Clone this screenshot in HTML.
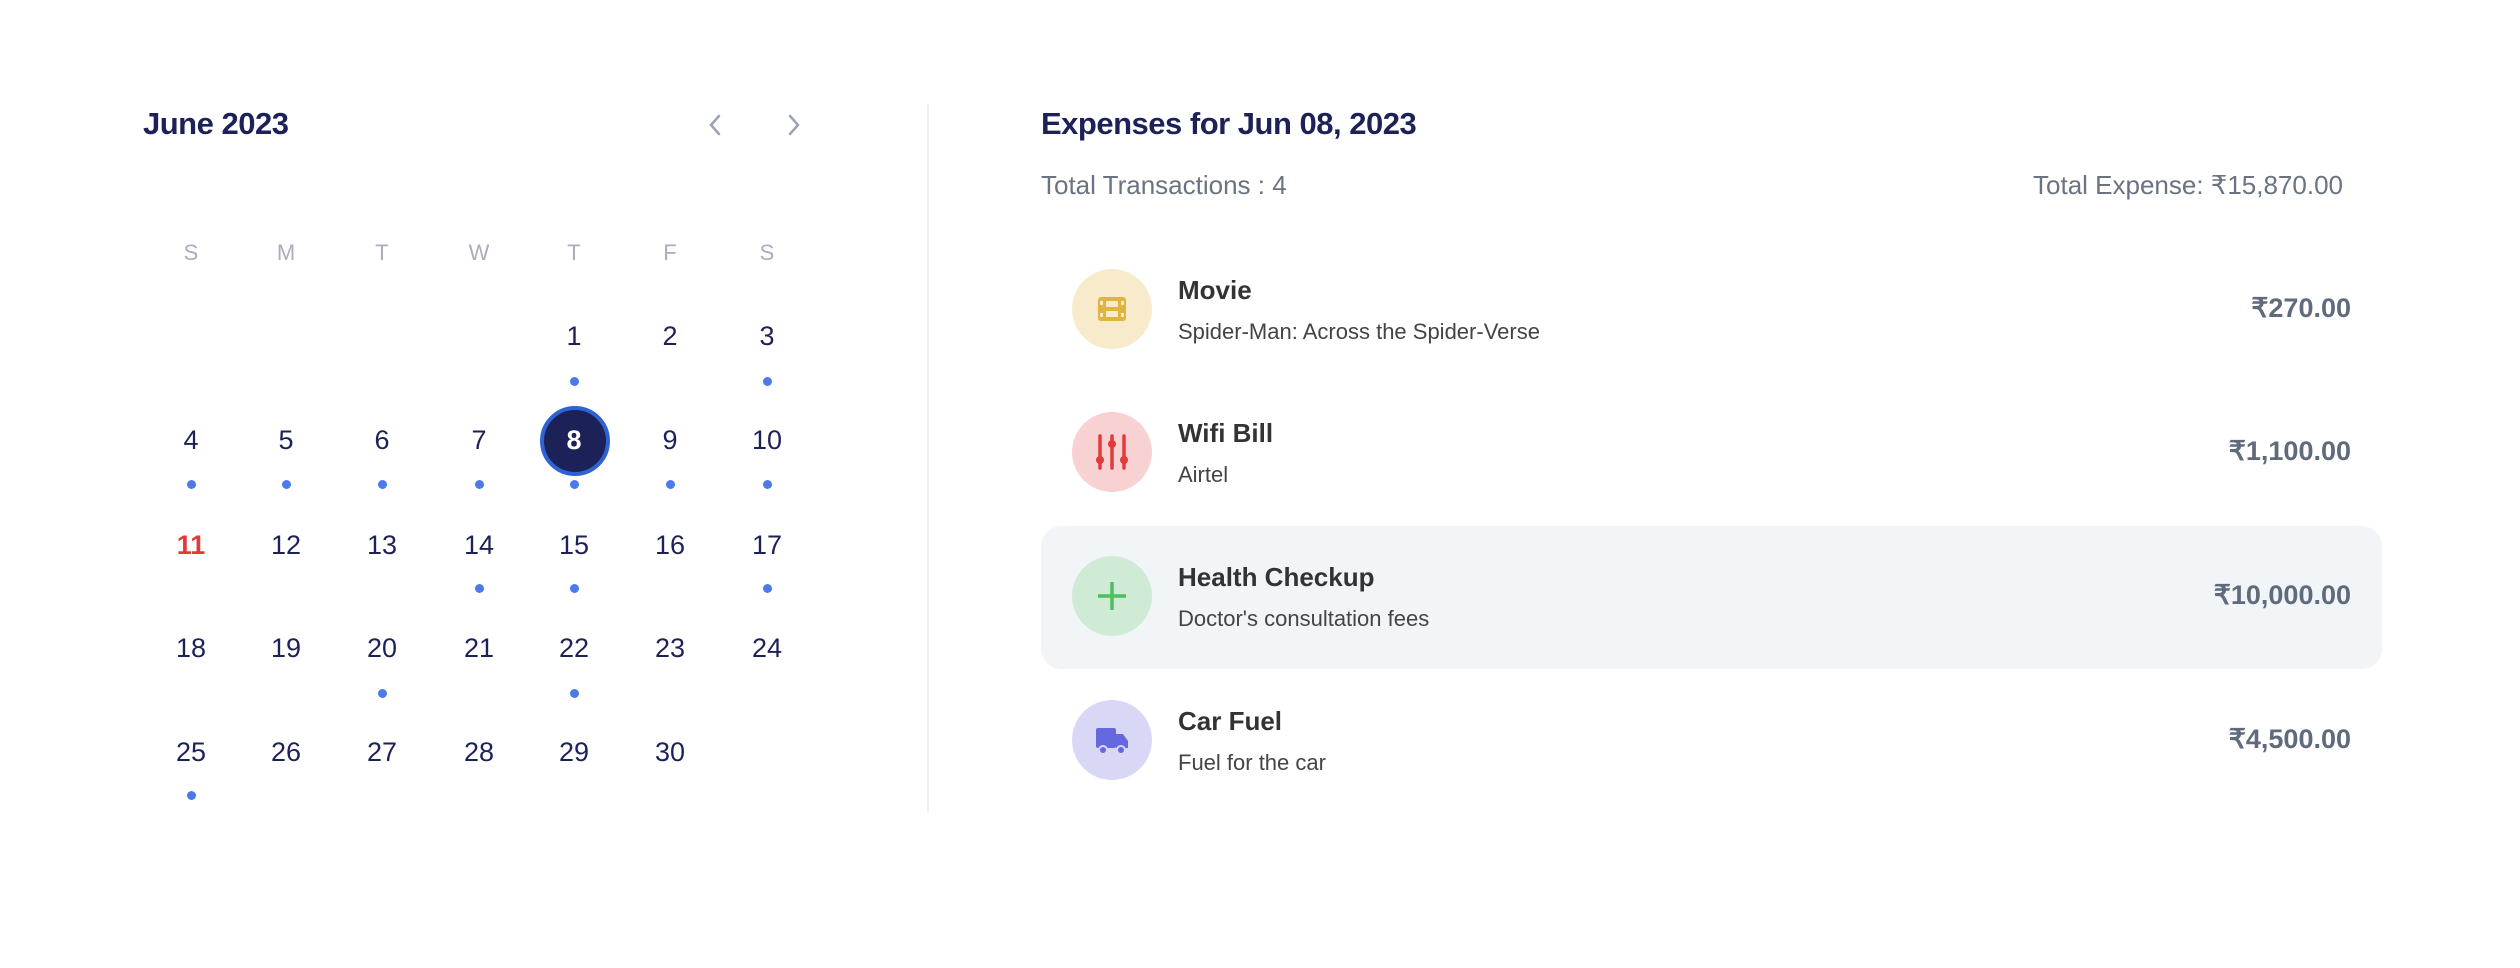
<!DOCTYPE html>
<html><head><meta charset="utf-8"><style>
body{margin:0;width:2520px;height:968px;background:#fff;font-family:"Liberation Sans",sans-serif;position:relative;overflow:hidden}
.a{position:absolute}
.hd{font-size:31px;font-weight:bold;color:#1c2257;letter-spacing:-0.5px}
.dl{position:absolute;width:60px;margin-left:-30px;text-align:center;font-size:22px;color:#a9aebb}
.d{position:absolute;width:70px;margin-left:-35px;text-align:center;font-size:27px;color:#1c2257;line-height:34px;margin-top:-17px}
.dot{position:absolute;width:9px;height:9px;border-radius:50%;background:#4a7be8;margin:-4.5px 0 0 -4.5px}
.ic{position:absolute;width:80px;height:80px;border-radius:50%;left:1072px;margin-top:-40px;display:flex;align-items:center;justify-content:center}
.t{position:absolute;left:1178px;font-size:26px;font-weight:bold;color:#333;margin-top:-34px}
.s{position:absolute;left:1178px;font-size:22px;color:#444;margin-top:10px}
.m{position:absolute;right:169px;font-size:27px;font-weight:bold;color:#5f6b7d;margin-top:-16px}
</style></head><body>
<div class="a hd" style="left:143px;top:106px">June 2023</div>
<svg class="a" style="left:704px;top:113px" width="22" height="24"><path d="M15 3 L7 12 L15 21" stroke="#9aa3b5" stroke-width="2.5" fill="none" stroke-linecap="round"/></svg>
<svg class="a" style="left:783px;top:113px" width="22" height="24"><path d="M7 3 L15 12 L7 21" stroke="#9aa3b5" stroke-width="2.5" fill="none" stroke-linecap="round"/></svg>
<div class="a" style="left:927px;top:104px;width:2px;height:708px;background:#eceef2"></div>

<div class="dl" style="left:191px;top:240px">S</div><div class="dl" style="left:286px;top:240px">M</div><div class="dl" style="left:382px;top:240px">T</div><div class="dl" style="left:479px;top:240px">W</div><div class="dl" style="left:574px;top:240px">T</div><div class="dl" style="left:670px;top:240px">F</div><div class="dl" style="left:767px;top:240px">S</div>

<div class="d" style="left:574px;top:336px">1</div><div class="d" style="left:670px;top:336px">2</div><div class="d" style="left:767px;top:336px">3</div>
<div class="dot" style="left:574px;top:381px"></div><div class="dot" style="left:767px;top:381px"></div>

<div class="d" style="left:191px;top:440px">4</div><div class="d" style="left:286px;top:440px">5</div><div class="d" style="left:382px;top:440px">6</div><div class="d" style="left:479px;top:440px">7</div>
<div class="a" style="left:540px;top:406px;width:62px;height:62px;border-radius:50%;background:#1c2257;border:4px solid #2f63d4"></div>
<div class="d" style="left:574px;top:440px;color:#fff;font-weight:bold">8</div>
<div class="d" style="left:670px;top:440px">9</div><div class="d" style="left:767px;top:440px">10</div>
<div class="dot" style="left:191px;top:484px"></div><div class="dot" style="left:286px;top:484px"></div><div class="dot" style="left:382px;top:484px"></div><div class="dot" style="left:479px;top:484px"></div><div class="dot" style="left:574px;top:484px"></div><div class="dot" style="left:670px;top:484px"></div><div class="dot" style="left:767px;top:484px"></div>

<div class="d" style="left:191px;top:545px;color:#e23a3a;font-weight:bold">11</div><div class="d" style="left:286px;top:545px">12</div><div class="d" style="left:382px;top:545px">13</div><div class="d" style="left:479px;top:545px">14</div><div class="d" style="left:574px;top:545px">15</div><div class="d" style="left:670px;top:545px">16</div><div class="d" style="left:767px;top:545px">17</div>
<div class="dot" style="left:479px;top:588px"></div><div class="dot" style="left:574px;top:588px"></div><div class="dot" style="left:767px;top:588px"></div>

<div class="d" style="left:191px;top:648px">18</div><div class="d" style="left:286px;top:648px">19</div><div class="d" style="left:382px;top:648px">20</div><div class="d" style="left:479px;top:648px">21</div><div class="d" style="left:574px;top:648px">22</div><div class="d" style="left:670px;top:648px">23</div><div class="d" style="left:767px;top:648px">24</div>
<div class="dot" style="left:382px;top:693px"></div><div class="dot" style="left:574px;top:693px"></div>

<div class="d" style="left:191px;top:752px">25</div><div class="d" style="left:286px;top:752px">26</div><div class="d" style="left:382px;top:752px">27</div><div class="d" style="left:479px;top:752px">28</div><div class="d" style="left:574px;top:752px">29</div><div class="d" style="left:670px;top:752px">30</div>
<div class="dot" style="left:191px;top:795px"></div>

<div class="a hd" style="left:1041px;top:106px">Expenses for Jun 08, 2023</div>
<div class="a" style="left:1041px;top:170px;font-size:26px;color:#6b7280">Total Transactions : 4</div>
<div class="a" style="right:177px;top:170px;font-size:26px;color:#6b7280">Total Expense: ₹15,870.00</div>

<div class="a" style="left:1041px;top:526px;width:1341px;height:143px;border-radius:20px;background:#f2f5f8"></div>

<div class="ic" style="top:309px;background:#f7ebcc"><svg width="32" height="32"><rect x="2" y="4" width="28" height="24" rx="3" fill="#e0b440"/><rect x="10" y="8" width="12" height="6" fill="#f7ebcc"/><rect x="10" y="18" width="12" height="6" fill="#f7ebcc"/><rect x="4" y="8" width="3" height="4" fill="#f7ebcc"/><rect x="4" y="20" width="3" height="4" fill="#f7ebcc"/><rect x="25" y="8" width="3" height="4" fill="#f7ebcc"/><rect x="25" y="20" width="3" height="4" fill="#f7ebcc"/></svg></div>
<div class="t" style="top:309px">Movie</div><div class="s" style="top:309px">Spider-Man: Across the Spider-Verse</div><div class="m" style="top:309px">₹270.00</div>

<div class="ic" style="top:452px;background:#f8d2d2"><svg width="36" height="40"><g stroke="#e23a3a" stroke-width="3.5" stroke-linecap="round"><line x1="6" y1="4" x2="6" y2="36"/><line x1="18" y1="4" x2="18" y2="36"/><line x1="30" y1="4" x2="30" y2="36"/></g><circle cx="6" cy="28" r="4" fill="#e23a3a"/><circle cx="18" cy="12" r="4" fill="#e23a3a"/><circle cx="30" cy="28" r="4" fill="#e23a3a"/></svg></div>
<div class="t" style="top:452px">Wifi Bill</div><div class="s" style="top:452px">Airtel</div><div class="m" style="top:452px">₹1,100.00</div>

<div class="ic" style="top:596px;background:#d0ebd5"><svg width="34" height="34"><path d="M17 3V31M3 17H31" stroke="#4cbf5e" stroke-width="3.5"/></svg></div>
<div class="t" style="top:596px">Health Checkup</div><div class="s" style="top:596px">Doctor's consultation fees</div><div class="m" style="top:596px">₹10,000.00</div>

<div class="ic" style="top:740px;background:#d8d8f6"><svg width="36" height="32"><rect x="2" y="4" width="20" height="20" rx="2" fill="#6668e0"/><path d="M22 10h7l5 7v7H22z" fill="#6668e0"/><circle cx="9" cy="26" r="4" fill="#6668e0" stroke="#d8d8f6" stroke-width="2"/><circle cx="27" cy="26" r="4" fill="#6668e0" stroke="#d8d8f6" stroke-width="2"/></svg></div>
<div class="t" style="top:740px">Car Fuel</div><div class="s" style="top:740px">Fuel for the car</div><div class="m" style="top:740px">₹4,500.00</div>
</body></html>
